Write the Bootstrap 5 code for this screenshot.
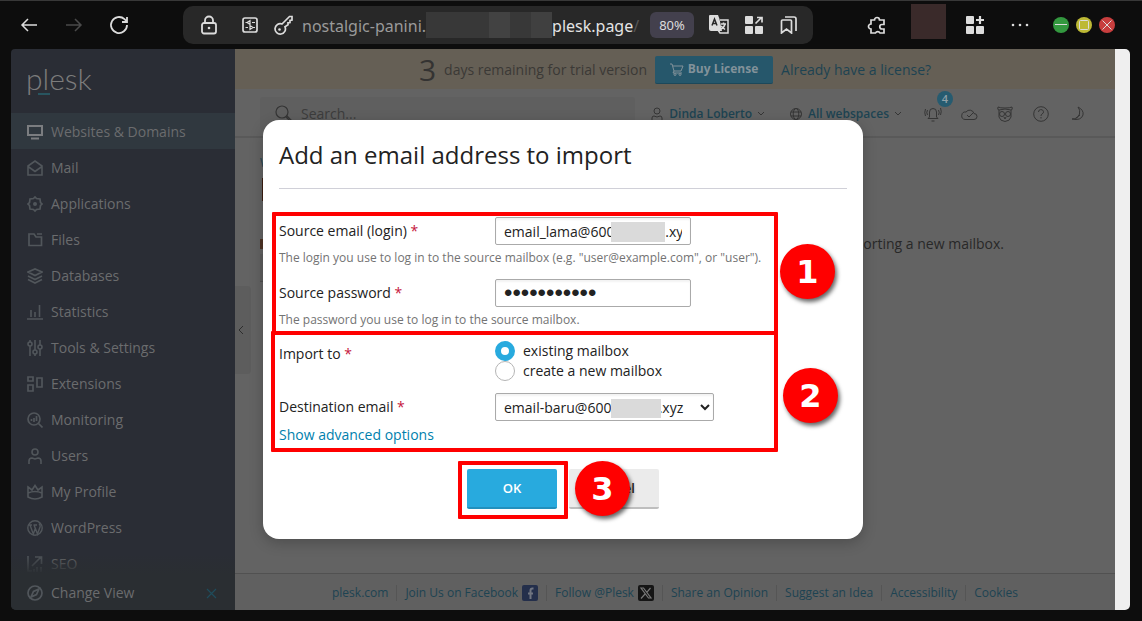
<!DOCTYPE html>
<html lang="en">
<head>
<meta charset="utf-8">
<meta name="viewport" content="width=device-width, initial-scale=1">
<title>Add an email address to import - Plesk</title>
<link href="https://cdn.jsdelivr.net/npm/bootstrap@5.3.0/dist/css/bootstrap.min.css" rel="stylesheet">
<style>
body{font-family:"Open Sans","Noto Sans",sans-serif;font-size:14px;line-height:20px;color:#222;background:#0d0d0d;border-top:1px solid #383838}
svg{display:block;flex:none;fill:none;stroke:currentColor}
svg .solid{fill:currentColor;stroke:none}
a{text-decoration:none}
.shell{min-height:calc(100vh - 1px)}
/* browser toolbar */
.toolbar{height:48px;color:#dcdcdc}
.toolbar button,.plain{background:none;border:0;padding:0;color:inherit;display:flex;align-items:center;justify-content:center}
.nav-keys{flex:none;width:183px;padding-left:6px}
.nav-keys button{width:45px}
.nav-keys .off{color:#4a4a4a}
.address{background:#282828;border-radius:10px;height:38px;padding:0 14px 0 17px;min-width:0}
.url{font-family:"Noto Sans","Open Sans",sans-serif;font-size:16px;color:#9a9a9a;white-space:nowrap;min-width:0;overflow:hidden;margin-left:8px;padding-top:2px}
.url .host{color:#e4e4e4}
.url .fade-end{color:#555}
.blur-bar{flex:none;width:126px;height:26px;margin-bottom:3px;background:linear-gradient(90deg,#383838 0 50%,#424242 50% 67%,#383838 67% 83%,#404040 83%)}
.toolbar .zoom-pill{flex:none;font-family:"Noto Sans",sans-serif;font-size:13px;background:#43404d;border-radius:6px;width:44px;height:26px}
.address .tool{margin-left:15px;width:20px}
.toolbar-end{flex:none;width:329px;padding-right:27px}
.avatar-box{width:35px;height:35px;background:#3a2a2a}
.more-key{margin:0 24px 0 27px}
.dotbtn{width:16px;height:16px;border-radius:50%}
.window-keys{gap:7px}
.toolbar .min{background:#33983f}
.toolbar .max{background:#bdb935}
.toolbar .cls{background:#c83e3e}
/* page */
.viewport-area{margin:0 12px 11px 11px;border-radius:4px 5px 5px 5px;overflow:hidden}
.scroll-track{width:15px;background:#efefef}
.side{width:224px;background:#2a2d35;color:#666b70}
.logo-row{height:64px;padding:13px 15px}
.logo-text{font-family:Lato,sans-serif;font-weight:300;font-size:30px;line-height:32px;color:#7c7c7c}
.logo-line{width:12px;height:2px;background:#285560;left:27px;top:44px}
.side-menu{height:0;min-height:0}
.side-menu a,.change-view{display:flex;align-items:center;gap:8px;height:36px;flex:none;padding:1px 16px 0;color:#6b6c6e}
.side-menu svg,.change-view svg{color:#51565b}
.side-menu a.current{background:#30383f}
.side-menu a.current svg{color:#7b7d80}
.side-fade{height:20px;bottom:0;left:0;right:0;background:linear-gradient(#2a2d3500,#2a2e32)}
.change-view{background:#2a2e32}
.change-view .shut{color:#1f4c5b}
.main-pane{background:#636363;min-width:0}
.trial{height:40px;padding-top:1px;background:#655f55;color:#3b3936}
.trial .days{font-size:30px;line-height:40px;color:#343332}
.buy{background:#26576b;border:0;border-bottom:1px solid #1d485a;border-radius:2px;width:118px;height:28px;color:#82929a;font-size:12px;font-weight:700}
.dark-link{color:#1d4352}
.page-head{height:49px;border-bottom:2px solid #595959;padding:8px 20px 0 25px;color:#353535}
.search-box{background:#5f5f5f;border-radius:3px;height:33px;padding-left:15px}
.search-box input{background:none;border:0;outline:0;min-width:0;color:#333;padding:0;width:100%}
.search-box input::placeholder{color:#3c3c3c;opacity:1}
.head-link{font-size:12px;font-weight:600;color:#1d4352;gap:6px;height:33px}
.head-link svg{color:#353535}
.webspaces{margin:0 14px 0 2px}
.tool-btn{width:36px;height:33px;position:relative}
.count{position:absolute;left:22px;top:-6px;width:16px;height:16px;border-radius:50%;background:#265b70;color:#91a1a8;font-size:11px;line-height:16px;font-weight:600;text-align:center}
.plain.collapse-tab{width:16px;height:88px;left:0;top:237px;background:#5d5d5d;border-radius:0 4px 4px 0;color:#2d2d2d}
.content-zone{padding:14px 111px 0 25px}
.crumb{font-size:12px;color:#1d4352}
.title-bit{width:8px;height:23px;background:#3c1d10;margin:5px 0 0 2px}
.back-note{margin-top:33px;color:#282828}
.note-bit{width:3px;height:10px;background:#4e3426}
.ghost-btn{width:60px;height:28px;background:#5d5d5d;border-bottom:1px solid #505050}
.site-foot{height:37px;padding-top:2px;border-top:1px solid #515151;background:#606060;font-size:12px}
.site-foot a{color:#1d4352;padding:0 8px;height:16px;line-height:16px;display:flex;gap:4px;border-left:1px solid #555}
.site-foot a:first-child{border:0}
/* dialog */
.dialog-layer{inset:0 15px 0 0}
.import-dialog{width:600px;background:#fff;border-radius:16px;padding:16px 16px 30px;box-shadow:0 4px 14px #00000038}
.import-dialog h1{font-size:24px;line-height:38px;font-weight:400;margin:0 0 28px;padding-bottom:14px;border-bottom:1px solid #d0d0d8}
.step{position:relative}
.gap-above{margin-top:11px}
.field-row{display:grid;grid-template-columns:216px auto;justify-content:start;align-items:center}
.field-row sup{color:#c5153b;top:0;font-size:14px;line-height:14px;vertical-align:baseline}
.tip{font-size:12px;line-height:20px;color:#737373;margin:3px 0 0}
.entry{height:28px;border:1px solid #aaa;border-radius:2px;padding:0 8px;color:#222;background:#fff;box-shadow:inset 0 2px 2px #0000000d;outline:0}
input.entry{width:196px}
select.entry{width:219px;padding:0 4px}
.entry.secret{font-family:"Liberation Sans",sans-serif;font-size:24px}
.mask{left:116px;top:5px;width:54px;height:20px;background:#dadada}
.mask.narrow{width:50px;top:6px;height:19px}
.group-name{padding-top:3px}
.choices{padding-bottom:1px}
.choice{display:flex;align-items:center;gap:8px;height:20px}
.choice input{appearance:none;width:20px;height:20px;margin:0;border:1px solid #b5b5b5;border-radius:50%;background:#fff}
.choice input:checked{border:6px solid #28aade}
.adv{color:#007fad;display:block;margin-top:4px}
.act{width:90px;height:40px;border:0;border-radius:2px;font-size:13px;font-weight:600}
.act.ok{background:#28aade;border-bottom:2px solid #2290bd;color:#fff}
.act.no{background:#ebebeb;border-bottom:2px solid #bebebe;color:#222}
.ring{position:absolute;border:4px solid red;border-radius:1px;pointer-events:none}
.ring-a{inset:-5px 69px -5px -7px}
.ring-b{inset:-10px 69px -7px -8px}
.ring-c{inset:-8px -11px -10px -9px}
.num{position:absolute;width:55px;height:55px;border-radius:50%;background:red;color:#fff;font:700 32px/57px "DejaVu Sans",sans-serif;text-align:center;box-shadow:2px 3px 4px #0009}
.num-a{right:12px;top:27px}
.num-b{right:9px;top:27px}
.num-c{left:10px;top:-8px}
</style>
</head>
<body>
<div class="shell d-flex flex-column">
<header class="toolbar d-flex align-items-center">
  <div class="nav-keys d-flex">
    <button aria-label="Back"><svg width="18" height="18" stroke-width="1.5"><path d="M17 9H2M8 3 2 9l6 6"/></svg></button>
    <button class="off" aria-label="Forward"><svg width="18" height="18" stroke-width="1.5"><path d="M1 9h15M10 3l6 6-6 6"/></svg></button>
    <button aria-label="Reload"><svg width="20" height="20" stroke-width="1.8"><path d="M18 10a8 8 0 1 1-2.5-5.8L18 6.6M18 2v5h-5"/></svg></button>
  </div>
  <div class="address d-flex align-items-center flex-fill">
    <svg width="18" height="20" stroke-width="1.8"><rect x="2" y="8" width="14" height="10.500" rx="2"/><path d="M5 8V5.500a4 4 0 0 1 8 0V8"/><circle class="solid" cx="9" cy="13" r="1.300"/></svg>
    <svg class="ms-4" width="16" height="18" stroke-width="1.700"><rect x="1" y="2" width="14" height="14" rx="2"/><path d="M3.500 6.500h3M10 6.500h3M8 4.500v4L5 6.500ZM3.500 11.500H6m4 0h3M8 9.500v4l3-2Z" stroke-width="1.200"/></svg>
    <svg class="ms-3" width="20" height="20" stroke-width="1.700"><path d="M8 9 15.500 1.500H18V5l-2 .5v2l-2 .3v2l-3 2A5.200 5.200 0 1 1 8 9Z"/><circle class="solid" cx="5.500" cy="14.500" r="1.300"/></svg>
    <div class="url d-flex align-items-center flex-fill"><span>nostalgic-panini.</span><span class="blur-bar"></span><span class="host">plesk.page</span><span class="fade-end">/</span></div>
    <button class="zoom-pill">80%</button>
    <button class="tool" aria-label="Translate"><svg width="20" height="20"><path class="solid" d="M1 0h8l1.500 4L13 16H2q-2 0-2-2V1q0-1 1-1Z"/><path d="M11 5h8v13h-8l-2-3M12 9h5m-2.500-1.500V9m1.500 0q-1 4-4 5m0-3 4 3.500" stroke-width="1.500"/><path d="M3 10.500 5.500 4 8 10.500M4 8.500h3" stroke="#282828" stroke-width="1.500"/></svg></button>
    <button class="tool" aria-label="Split"><svg width="18" height="18"><g class="solid"><rect width="8" height="8" rx="1"/><rect y="10" width="8" height="8" rx="1"/><rect x="10" y="10" width="8" height="8" rx="1"/></g><path d="m10.500 7.500 6-6M12 1.500h5v5" stroke-width="1.700"/></svg></button>
    <button class="tool" aria-label="Bookmarks"><svg width="18" height="18" stroke-width="1.700"><path d="M1.500 5q0-1 1-1h8q1 0 1 1v12L6.500 13l-5 4ZM5 1h9q2 0 2 2v12"/></svg></button>
  </div>
  <div class="toolbar-end d-flex align-items-center justify-content-end">
    <button aria-label="Extensions"><svg width="20" height="20" stroke-width="1.700"><path d="M4 5h3.500a2.500 2.500 0 1 1 5 0H17v4.500h-2a2 2 0 0 0 0 4.500h2v4h-4a2.500 2.500 0 0 0-4.500 0H4v-4a2.500 2.500 0 1 1 0-5Z"/></svg></button>
    <div class="avatar-box ms-4 me-3 mb-2"></div>
    <button class="ms-1" aria-label="Apps"><svg width="18" height="18"><g class="solid"><rect width="8" height="8" rx="1"/><rect y="10" width="8" height="8" rx="1"/><rect x="10" y="10" width="8" height="8" rx="1"/></g><path d="M14 0v8M10 4h8" stroke-width="2.200"/></svg></button>
    <button class="more-key" aria-label="More"><svg width="18" height="4"><g class="solid"><circle cx="2" cy="2" r="1.300"/><circle cx="9" cy="2" r="1.300"/><circle cx="16" cy="2" r="1.300"/></g></svg></button>
    <div class="window-keys d-flex">
    <button class="dotbtn min" aria-label="Minimise"><svg width="16" height="16"><path d="M2 7.500h12"/></svg></button>
    <button class="dotbtn max" aria-label="Maximise"><svg width="16" height="16"><rect x="3.500" y="3.500" width="9" height="9" rx="1"/></svg></button>
    <button class="dotbtn cls" aria-label="Close"><svg width="16" height="16"><path d="m3.500 3.500 9 9m0-9-9 9"/></svg></button>
    </div>
  </div>
</header>

<div class="viewport-area d-flex flex-fill position-relative">
  <aside class="side d-flex flex-column">
    <div class="logo-row position-relative"><span class="logo-text">plesk</span><span class="logo-line position-absolute"></span></div>
    <nav class="side-menu d-flex flex-column flex-fill overflow-hidden position-relative">
      <a class="current" href="#"><svg width="16" height="16" stroke-width="2"><path d="M1 2h14v9H1ZM4 14.500h8"/></svg>Websites &amp; Domains</a>
      <a href="#"><svg width="16" height="16" stroke-width="1.600"><path d="M1 6 8 1l7 5v9H1ZM1 6.500l7 5 7-5"/></svg>Mail</a>
      <a href="#"><svg width="16" height="16" stroke-width="1.700"><path d="m6.500 2.500 1.500-1.500 1.500 1.500 3.500.5.500 3.500L15 8l-1.500 1.500L13 13l-3.500.5L8 15l-1.500-1.500L3 13l-.5-3.500L1 8l1.500-1.500L3 3Z"/><circle class="solid" cx="8" cy="8" r="2"/></svg>Applications</a>
      <a href="#"><svg width="16" height="16" stroke-width="1.700"><path d="M2 2h5l2 3h5.500v8.500H2ZM10 2h5"/></svg>Files</a>
      <a href="#"><svg width="16" height="16" stroke-width="1.700"><path d="m1 4 7-3 7 3-7 3.500ZM1 8l7 3.500L15 8M1 11.500 8 15l7-3.500"/></svg>Databases</a>
      <a href="#"><svg width="16" height="16" stroke-width="1.600"><path d="M0 15h16M4 13V6M8 13V8M12.500 13V1"/></svg>Statistics</a>
      <a href="#"><svg width="16" height="16" stroke-width="1.600"><path d="M3 0v2m0 4v10M8 0v10m0 4v2M13 0v5m0 4v7"/><circle cx="3" cy="4" r="2"/><circle cx="8" cy="12" r="2"/><circle cx="13" cy="7" r="2"/></svg>Tools &amp; Settings</a>
      <a href="#"><svg width="16" height="16" stroke-width="1.700"><path d="M1 1h5v4H1ZM1 9h5v6H1ZM10 2h5v9h-5Z"/></svg>Extensions</a>
      <a href="#"><svg width="16" height="16" stroke-width="1.700"><circle cx="7" cy="7" r="6"/><path d="m11.500 11.500 4 4M4.500 9V7M7 10V6M9.500 9V4"/></svg>Monitoring</a>
      <a href="#"><svg width="16" height="16" stroke-width="1.600"><circle cx="8" cy="4" r="3"/><path d="M2 16v-3q0-3 3-3l3 1 3-1q3 0 3 3v3"/></svg>Users</a>
      <a href="#"><svg width="16" height="16" stroke-width="1.600"><path d="M1 3l4 3 3-4.500L11 6l4-3v10q-7 4-14 0ZM1 9q7-3 14 0"/></svg>My Profile</a>
      <a href="#"><svg width="16" height="16" stroke-width="1.400"><circle cx="8" cy="8" r="7.200"/><path d="M1.500 5H5m1.500 0H10M3 5l3.300 9L8.500 8M7 5l3.500 9L13 7q.5-2-1-3.500"/></svg>WordPress</a>
      <a href="#"><svg width="16" height="16" stroke-width="1.700"><path d="M1 0v15h4M5 10l9-9M8 1h6.500v7M7 13v3M10 11v5M14 11v5"/></svg>SEO</a>
      <span class="side-fade position-absolute"></span>
    </nav>
    <a class="change-view" href="#"><svg width="16" height="16" stroke-width="1.700"><circle cx="8" cy="8" r="7"/><path d="m12 4-2.500 5.500L4 12l2.500-5.500Z"/></svg><span class="flex-fill">Change View</span><svg class="shut" width="16" height="16" stroke-width="1.200"><path d="m4 4 9 9m0-9-9 9"/></svg></a>
  </aside>

  <main class="main-pane d-flex flex-column flex-fill position-relative">
    <div class="trial d-flex align-items-center justify-content-center gap-2"><span class="days">3</span><span>days remaining for trial version</span>
      <button class="buy d-flex align-items-center justify-content-center gap-1"><svg width="14" height="14"><path d="M0 2h2l2 7h7l2-5H3M4 9l-1 2h9"/><circle cx="5" cy="12.500" r="1"/><circle cx="10" cy="12.500" r="1"/></svg>Buy License</button>
      <a class="dark-link" href="#">Already have a license?</a></div>
    <div class="page-head d-flex align-items-start">
      <label class="search-box d-flex align-items-center gap-2 flex-fill me-3"><svg width="18" height="18" stroke-width="1.200"><circle cx="7" cy="7" r="6"/><path d="m11 12 5 5 1-1-5-5"/></svg><input type="search" placeholder="Search..." aria-label="Search"></label>
      <a href="#" class="head-link d-flex align-items-center me-4"><svg width="12" height="14"><circle cx="6" cy="4" r="3"/><path d="M1 14v-3q0-2 2-2l3 1 3-1q2 0 2 2v3"/></svg>Dinda Loberto<svg width="6" height="6"><path d="m0 1 3 3 3-3"/></svg></a>
      <a href="#" class="head-link webspaces d-flex align-items-center"><svg width="12" height="12"><circle cx="6" cy="6" r="5.500"/><ellipse cx="6" cy="6" rx="2.800" ry="5.500"/><path d="M1 4h10M1 8h10"/></svg>All webspaces<svg width="6" height="6"><path d="m0 1 3 3 3-3"/></svg></a>
      <button class="plain tool-btn" aria-label="Notifications"><svg width="18" height="16"><path d="M5.500 11V6a3.500 3.500 0 0 1 7 0v5l1.500 1.500H4ZM7.500 15h3M3.500 4q-1.500 2.500 0 5M1.500 3q-1.500 3.500 0 7M14.500 4q1.500 2.500 0 5m2-7q1.500 3.500 0 7"/></svg><span class="count">4</span></button>
      <button class="plain tool-btn" aria-label="Cloud"><svg width="17" height="14"><path d="M4 12.500h9a3 3 0 0 0 0-6A4.500 4.500 0 0 0 5 5a3.700 3.700 0 0 0-1 7.500ZM6 8l2 2 4-4"/></svg></button>
      <button class="plain tool-btn" aria-label="Assistant"><svg width="16" height="16"><path d="M2 4q-2 0-1-3 2 1 7 1t7-1q1 3-1 3M2 4q6-2 12 0v7q-1 4-6 4.500Q3 15 2 11Z"/><circle cx="5" cy="8" r="2.500"/><circle cx="11" cy="8" r="2.500"/><path d="m7 11 1 2 1-2"/></svg></button>
      <button class="plain tool-btn" aria-label="Help"><svg width="16" height="16"><circle cx="8" cy="8" r="7.300"/><path d="M5.500 6a2.500 2.300 0 1 1 3.500 2q-1 .5-1 2M8 11v1.500"/></svg></button>
      <button class="plain tool-btn" aria-label="Dark mode"><svg width="16" height="16"><path d="M9 1q6 3 5 8-2 6-11 4 6 0 7.500-5Q11.500 4 9 1ZM7 12l4-3"/></svg></button>
    </div>
    <div class="content-zone flex-fill">
      <a class="crumb" href="#">W</a>
      <div class="title-bit"></div>
      <div class="back-note d-flex align-items-center justify-content-between"><span class="note-bit"></span><span>orting a new mailbox.</span></div>
      <div class="ghost-btn"></div>
    </div>
    <button class="collapse-tab plain position-absolute pe-1" aria-label="Collapse sidebar"><svg width="6" height="10"><path d="M5 1 1 5l4 4"/></svg></button>
    <footer class="site-foot d-flex align-items-center justify-content-center">
      <a href="#">plesk.com</a>
      <a href="#">Join Us on Facebook<svg width="16" height="16"><rect width="16" height="16" rx="2" fill="#242f4b" stroke="none"/><path d="M11.500 3.500h-1q-2 0-2 2V14M6 8.500h5" stroke="#707580" stroke-width="2"/></svg></a>
      <a href="#">Follow @Plesk<svg width="16" height="16"><rect width="16" height="16" rx="2" fill="#151515" stroke="none"/><path d="M3 3h2.500L13 13h-2.500ZM12.500 3 9 7.200M7 9l-4 4.500" stroke="#777" stroke-width="1.200"/></svg></a>
      <a href="#">Share an Opinion</a><a href="#">Suggest an Idea</a><a href="#">Accessibility</a><a href="#">Cookies</a>
    </footer>
  </main>
  <div class="scroll-track"></div>

  <div class="dialog-layer position-absolute d-flex align-items-center justify-content-center">
    <form class="import-dialog" role="dialog" aria-labelledby="dlg-title">
      <h1 id="dlg-title">Add an email address to import</h1>
      <section class="step">
        <div class="field-row"><label for="src">Source email (login) <sup>*</sup></label>
          <div class="position-relative d-flex"><input class="entry" id="src" type="text" value="email_lama@600&nbsp;&nbsp;&nbsp;&nbsp;&nbsp;&nbsp;&nbsp;&nbsp;&nbsp;&nbsp;&nbsp;&nbsp;&nbsp;&nbsp;.xyz"><span class="mask position-absolute"></span></div></div>
        <p class="tip">The login you use to log in to the source mailbox (e.g. "user@example.com", or "user").</p>
        <div class="field-row gap-above"><label for="pwd">Source password <sup>*</sup></label><input class="entry secret" id="pwd" type="password" value="passwordabc"></div>
        <p class="tip">The password you use to log in to the source mailbox.</p>
        <span class="ring ring-a"></span><span class="num num-a">1</span>
      </section>
      <section class="step gap-above">
        <div class="field-row align-items-start" role="radiogroup" aria-labelledby="imp"><span class="group-name" id="imp">Import to <sup>*</sup></span>
          <div class="choices"><label class="choice"><input type="radio" name="to" checked>existing mailbox</label><label class="choice"><input type="radio" name="to">create a new mailbox</label></div></div>
        <div class="field-row gap-above"><label for="dst">Destination email <sup>*</sup></label>
          <div class="position-relative d-flex"><select class="entry" id="dst"><option>email-baru@600&nbsp;&nbsp;&nbsp;&nbsp;&nbsp;&nbsp;&nbsp;&nbsp;&nbsp;&nbsp;&nbsp;&nbsp;&nbsp;.xyz</option></select><span class="mask narrow position-absolute"></span></div></div>
        <a class="adv" href="#">Show advanced options</a>
        <span class="ring ring-b"></span><span class="num num-b">2</span>
      </section>
      <div class="d-flex justify-content-center mt-4">
        <div class="step d-flex"><button type="button" class="act ok">OK</button><span class="ring ring-c"></span></div>
        <div class="step d-flex ms-2 ps-1"><button type="button" class="act no">Cancel</button><span class="num num-c">3</span></div>
      </div>
    </form>
  </div>
</div>
</div>
<script src="https://cdn.jsdelivr.net/npm/bootstrap@5.3.0/dist/js/bootstrap.bundle.min.js"></script>
</body>
</html>
